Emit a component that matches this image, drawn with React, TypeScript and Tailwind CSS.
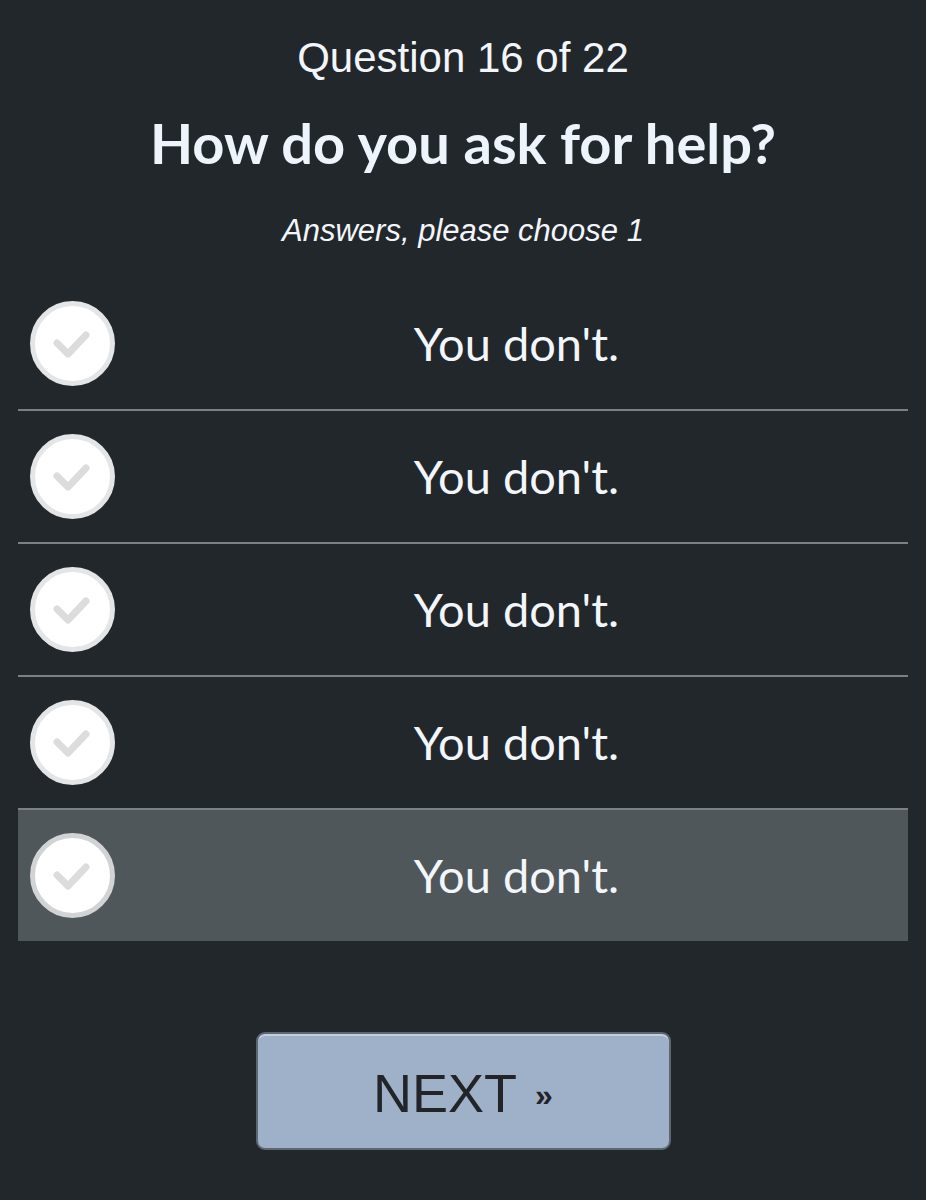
import React, { useState } from 'react';

const answers = ["You don't.", "You don't.", "You don't.", "You don't.", "You don't."];

function CheckCircle({ active }: { active: boolean }) {
  return (
    <div
      className={`flex h-[85px] w-[85px] items-center justify-center rounded-full border-[5px] bg-white ${
        active ? 'border-[#d2d3d4]' : 'border-[#e4e5e6]'
      }`}
    >
      <svg width="48" height="48" viewBox="0 0 48 48" className="mt-[1px]">
        <path
          d="M9 23 L20 34 L38 15"
          fill="none"
          stroke="#dcdcdc"
          strokeWidth="7"
          strokeLinecap="round"
          strokeLinejoin="round"
        />
      </svg>
    </div>
  );
}

export default function App() {
  const [selected, setSelected] = useState(4);

  return (
    <div className="flex min-h-[1200px] w-full flex-col items-center bg-[#22272c] pt-[37px]">
      <p className="font-['Liberation_Sans',Arial,sans-serif] text-[42px] leading-none text-[#f2f5fa]">
        Question 16 of 22
      </p>
      <h1 className="mt-[36px] font-['Lato','Open_Sans',sans-serif] text-[56px] font-bold leading-none text-[#eef4fc]">
        How do you ask for help?
      </h1>
      <p className="mt-[44px] font-['Liberation_Sans',Arial,sans-serif] text-[31px] italic leading-none text-[#f2f5fa]">
        Answers, please choose 1
      </p>

      <div className="mt-[32px] flex w-[890px] flex-col">
        {answers.map((answer, i) => {
          const active = i === selected;
          const last = i === answers.length - 1;
          return (
            <button
              key={i}
              onClick={() => setSelected(i)}
              className={`flex w-full items-center text-left ${last ? 'h-[131px]' : 'h-[133px]'} ${
                active ? 'bg-[#50575a]' : ''
              } ${last ? '' : 'border-b-2 border-[#7b8085]'}`}
            >
              <div className="flex w-[107px] shrink-0 justify-center pl-[1px]">
                <CheckCircle active={active} />
              </div>
              <span className="flex-1 text-center font-['Lato','Open_Sans',sans-serif] text-[47px] font-normal leading-none text-[#f2f6fb]">
                {answer}
              </span>
            </button>
          );
        })}
      </div>

      <button className="mt-[91px] flex h-[118px] w-[415px] items-center justify-center gap-[18px] rounded-[9px] border-2 border-[#5d6772] bg-[#9fb0c9] shadow-[inset_0_2px_0_#c3cfe0] font-['Liberation_Sans',Arial,sans-serif] text-[#222427]">
        <span className="mt-[4px] text-[54px] leading-none">NEXT</span>
        <span className="mt-[8px] text-[32px] font-bold leading-none">»</span>
      </button>
    </div>
  );
}
